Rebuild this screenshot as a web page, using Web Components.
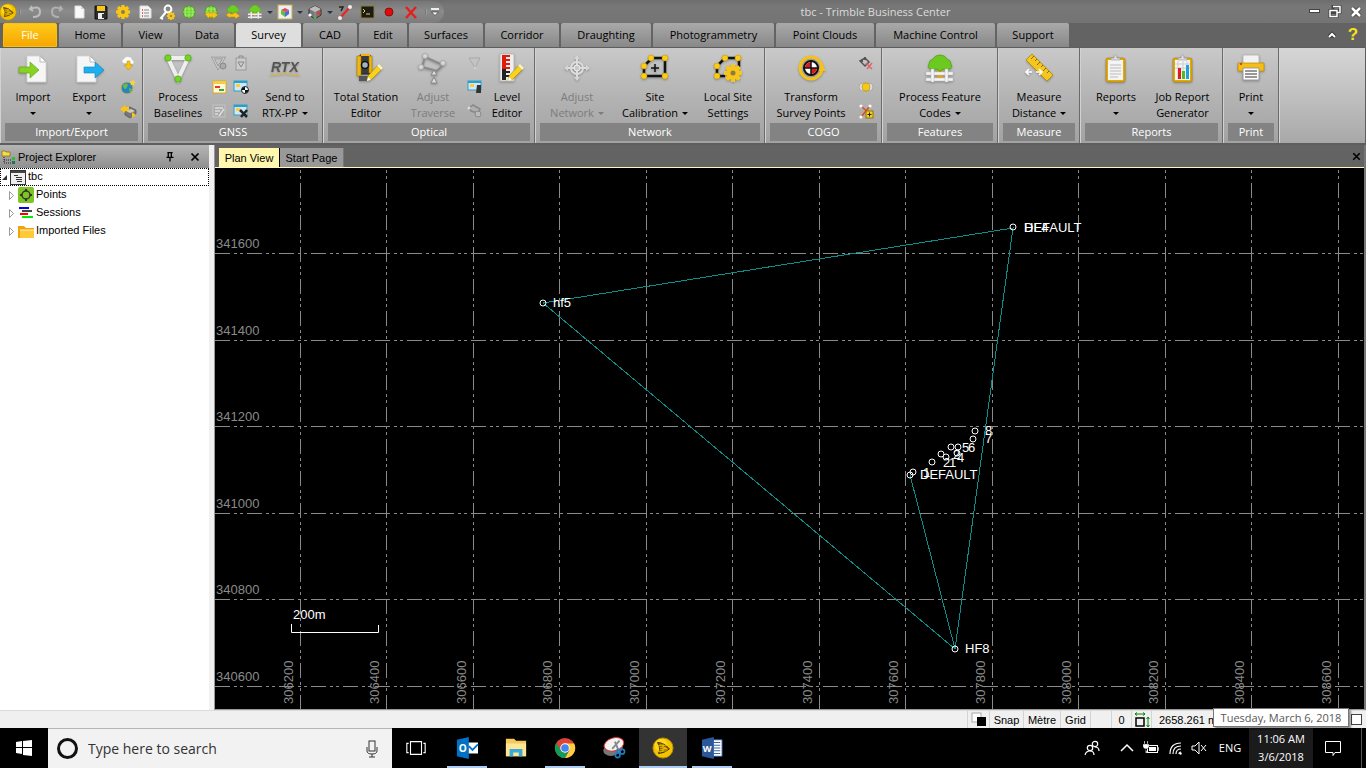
<!DOCTYPE html>
<html lang="en">
<head>
<meta charset="utf-8">
<title>tbc - Trimble Business Center</title>
<style>
html,body{height:100%}
body{margin:0;background:#000;color:#000;font:11px/16px "Open Sans","Noto Sans",sans-serif}
</style>
</head>
<body>
<tbc-app></tbc-app>
<script>
/* ---------- icon library: [view box size, markup] ---------- */
const doc32='<path d="M10 3h13l6 6v20H10z" fill="#f6f6f6" stroke="#d8d8d8"/><path d="M23 3v6h6z" fill="#fff" stroke="#bbb"/>';
const trimble='<circle cx="12" cy="12" r="11" fill="#f5c400" stroke="#b58b00"/><circle cx="10" cy="9" r="7" fill="#ffe028" opacity=".7"/><path d="M6 6q7 0 13 7-6 5-12 5 3-6-1-12z" fill="#8a6a00" stroke="#3f3000" stroke-width="1"/><path d="M9 8l8 6M8 11l9 2M8 14l8-1M9 17l6-6M12 7v9M5 9q6 1 11 0M6 16q4 0 10-1" fill="none" stroke="#f5c400" stroke-width=".8"/>';
const gear=(cx,cy,r)=>{let s='';for(let i=0;i<8;i++)s+=`<rect x="${cx-r*.22}" y="${cy-r}" width="${r*.44}" height="${r*2}" rx="${r*.1}" transform="rotate(${i*45} ${cx} ${cy})"/>`;return `<g fill="#f8c617">${s}<circle cx="${cx}" cy="${cy}" r="${r*.74}"/></g><circle cx="${cx}" cy="${cy}" r="${r*.28}" fill="#8b7b45"/>`};
const pencil='<path d="M17 28l1-5 9-10 4 4-9 9z" fill="#f8d21c" stroke="#a88400" stroke-width=".6"/><path d="M27 13l2-2 4 4-2 2z" fill="#fff2b8"/><path d="M17 28l1-4 3 3z" fill="#fff"/>';
const dots=a=>a.map(p=>`<circle cx="${p[0]}" cy="${p[1]}" r="3" fill="#f9cd15" stroke="#c79500" stroke-width=".5"/>`).join('');
const globe='<circle cx="8" cy="8" r="6" fill="#6ed52e" stroke="#4c9c18"/><path d="M2 8h12M8 2v12M3 5h10M3 11h10M5 3q-2 5 0 10M11 3q2 5 0 10" fill="none" stroke="#b6f58a" stroke-width=".6"/>';
const tree=(g)=>`<path d="M14 14h4l1 11h-6z" fill="#e0a412"/><path d="M6 16q-3-2-1-5 0-4 4-5 2-4 7-4t7 4q4 1 4 5 2 3-1 5-3 1-6 0l-3 1-1 3-1-3-3-1q-3 1-6 0z" fill="${g}" stroke="#4d9f14" stroke-width=".7"/>`;
const fence='<g fill="#f5f5f5" stroke="#b9b9b9" stroke-width=".5"><path d="M2 19h27v3H2zM2 25h27v3H2z"/><path d="M7 16h3v13H7zM21 16h3v13h-3z"/></g>';
const board='<rect x="6" y="5" width="19" height="24" rx="2" fill="#e2aa0c" stroke="#a97e00" stroke-width=".6"/><rect x="8" y="7" width="15" height="20" fill="#f4f4f4"/><path d="M11 7V5h3q0-3 1.500-3T17 5h3v2z" fill="#ddd" stroke="#999" stroke-width=".6"/>';
const ICONS={
trimble:[24,trimble],
undo:[16,'<path d="M5 2l-2 3 3 2M4 5q9-4 9 3 0 5-7 5" fill="none" stroke="#bdbdbd" stroke-width="2"/>'],
redo:[16,'<path d="M11 2l2 3-3 2M12 5Q3 1 3 8q0 5 7 5" fill="none" stroke="#b0b0b0" stroke-width="2"/>'],
newdoc:[16,'<path d="M4 2h6l3 3v9H4z" fill="#fafafa" stroke="#ddd"/><path d="M10 2v3h3" fill="#ccc"/>'],
save:[16,'<path d="M2 2h11l1 1v12H2z" fill="#2c2c2c" stroke="#111"/><rect x="4" y="2" width="8" height="5" fill="#f4c61e"/><rect x="5" y="9" width="6" height="6" fill="#eee"/><rect x="9" y="10" width="2" height="4" fill="#333"/>'],
gear:[16,gear(8,8,7)],
list:[16,'<path d="M3 2h8l3 3v9H3z" fill="#f4f4f4" stroke="#ddd"/><path d="M5 6h1M5 9h1M5 12h1" stroke="#d66" stroke-width="2"/><path d="M7 6h5M7 9h5M7 12h5" stroke="#888"/>'],
key:[16,'<circle cx="9" cy="5" r="3.4" fill="none" stroke="#fff" stroke-width="2"/><path d="M7 8l-5 6 2 1" fill="none" stroke="#fff" stroke-width="2"/>'+gear(12,12,4)],
globe:[16,globe],
globey:[16,globe+'<path d="M2 10l4-3v2h4V7l5 4-5 4v-2H6v2z" fill="#f6c31a" stroke="#a98000" stroke-width=".4"/>'],
treey:[16,'<g transform="scale(.5)">'+tree('#6bd023')+'</g><path d="M1 11l4-3v2h3l2-2 5 4-5 3v-2H5v1z" fill="#f6c31a" stroke="#a98000" stroke-width=".4"/>'],
treef:[16,'<g transform="scale(.5)">'+tree('#6bd023')+fence+'</g>'],
colors:[16,'<rect x="1" y="1" width="14" height="14" fill="#eee" stroke="#c4b05c"/><path d="M8 4l4 2-4 2-4-2z" fill="#e45"/><path d="M4 6l4 2v5l-4-3z" fill="#56c33a"/><path d="M12 6v4l-4 3V8z" fill="#5069d6"/>'],
cube:[16,'<path d="M8 2l6 3v6l-6 4-6-4V5z" fill="#777" stroke="#333"/><path d="M8 2l6 3-6 3-6-3z" fill="#bdbdbd"/><path d="M8 8v7" stroke="#999"/><circle cx="3" cy="11" r="1.6" fill="#fff"/><circle cx="12" cy="9" r="1.8" fill="#e03838"/><circle cx="8" cy="14" r="1.5" fill="#4caf50"/>'],
line:[16,'<path d="M3 14L13 3" stroke="#e22" stroke-width="2"/><path d="M2 3h4l-2 4" fill="none" stroke="#222" stroke-width="1.5"/><circle cx="3" cy="14" r="2" fill="#eee"/><circle cx="13" cy="3" r="2" fill="#eee"/>'],
console:[16,'<rect x="2" y="2" width="13" height="12" fill="#1b1b1b" stroke="#8b7b33"/><path d="M4 5l2 2-2 2M7 10h4" fill="none" stroke="#e9d54b"/>'],
rec:[16,'<circle cx="8" cy="8" r="4" fill="#e10b0b" stroke="#8a1010"/>'],
del:[16,'<path d="M3 3l10 11M13 3L3 14" stroke="#e32020" stroke-width="2.500"/>'],
import:[32,doc32+'<path d="M2 14h11V9l9 8-9 8v-5H2z" fill="#86d321" stroke="#5c9c10" stroke-width=".6"/>'],
export:[32,'<g transform="translate(-6)">'+doc32+'</g><path d="M11 14h11V9l9 8-9 8v-5H11z" fill="#1eaff0" stroke="#1380b8" stroke-width=".6"/>'],
cloud:[16,'<path d="M3 8q-2-3 1-4 1-3 5-2 3 0 3 3 3 1 1 4z" fill="#fff" stroke="#ccc" stroke-width=".5"/><path d="M7 6h3v4h3l-4.500 5L4 10h3z" fill="#fbc510" stroke="#b78800" stroke-width=".5"/>'],
world:[16,'<circle cx="7" cy="9" r="6" fill="#2684c0" stroke="#c9b15a"/><path d="M3 6q4-3 5 0l-2 4q-3 0-3-4M9 9l3 1-2 4z" fill="#69bd45"/><path d="M13 0l1 2.500 2 .5-2 1.500.5 2.500-2-1.500-2 1 .5-2-1.500-2h2.500z" fill="#fbd43a"/>'],
device:[16,'<path d="M4 6l6-2 6 3v4l-6 4-5-3z" fill="#777" stroke="#444" stroke-width=".6"/><path d="M6 8l5-2 4 2-5 2z" fill="#ccc"/><path d="M0 6l5-4v2h4v4H5v2z" fill="#fbc510"/><path d="M16 12l-4-3v6z" fill="#fbc510"/>'],
baselines:[32,'<path d="M6 5h20L16 26z" fill="none" stroke="#eee" stroke-width="4"/><g fill="#72d522" stroke="#4a9c10" stroke-width=".6"><circle cx="6" cy="5" r="3.200"/><circle cx="26" cy="5" r="3.200"/><circle cx="16" cy="26" r="3.200"/></g>'],
gnss1:[16,'<path d="M2 3h11L7 13z" fill="none" stroke="#8f8f8f" stroke-width="2.500"/><path d="M2 3h11L7 13z" fill="none" stroke="#ccc" stroke-width="1.200"/><circle cx="12" cy="11" r="3" fill="#aaa" stroke="#888"/>'],
gnss2:[16,'<rect x="3" y="3" width="10" height="12" fill="#ccc" stroke="#999"/><path d="M6 3V1h4v2M5 7h6l-3 5z" fill="none" stroke="#888"/>'],
gnss3:[16,'<rect x="2" y="2" width="13" height="12" fill="#fff9d8" stroke="#d4ab25"/><rect x="2" y="2" width="13" height="3" fill="#f4cd48"/><path d="M4 8h5" stroke="#e33" stroke-width="2"/><path d="M8 11h5" stroke="#3a3" stroke-width="2"/>'],
gnss4:[16,'<rect x="1" y="2" width="13" height="10" fill="#cfe9f4" stroke="#2a9fc9"/><path d="M1 3h13" stroke="#2a9fc9" stroke-width="2"/><rect x="3" y="5" width="4" height="3" fill="#fc4"/><circle cx="12" cy="11" r="3.500" fill="#fff" stroke="#222"/><path d="M12 8v3H8.500A3.500 3.500 0 0112 8M12 14v-3h3.500A3.500 3.500 0 0112 14" fill="#111"/>'],
gnss5:[16,'<rect x="2" y="2" width="12" height="12" fill="#aaa" stroke="#c4c4c4"/><path d="M4 5h8M4 8h5M4 11h3M13 6l-5 7" stroke="#ddd" stroke-width="1.500"/>'],
gnss6:[16,'<rect x="1" y="2" width="13" height="10" fill="#cfe9f4" stroke="#2a9fc9"/><path d="M1 3h13" stroke="#2a9fc9" stroke-width="2"/><rect x="3" y="5" width="4" height="3" fill="#fc4"/><path d="M7 7l7 7M14 7l-6 7" stroke="#222" stroke-width="2.500"/>'],
rtx:[32,'<text x="2" y="19" font-family="Liberation Sans" font-size="14" font-weight="700" font-style="italic" fill="#555">RTX</text><path d="M1 22q14-3 30 0" fill="none" stroke="#e5b72c"/>'],
station:[32,'<path d="M10 2h10v19H10z" fill="#3b3b3b" stroke="#222"/><path d="M7 3h4v20H7zM19 3h3v17h-3z" fill="#f1b50e" stroke="#9f7600" stroke-width=".6"/><circle cx="15" cy="12" r="3.500" fill="#9db6c2" stroke="#111" stroke-width="1.500"/><path d="M11 2h9" stroke="#f1b50e" stroke-width="2"/><path d="M9 23h11v5H9z" fill="#555"/>'+pencil],
traverse:[32,'<path d="M8 4l18 8-6 6-15-4z" fill="none" stroke="#8a8a8a" stroke-width="2"/><g fill="#d8d8d8" stroke="#aaa"><circle cx="8" cy="3" r="2.500"/><circle cx="26" cy="10" r="2.500"/><circle cx="4" cy="14" r="2.500"/></g><path d="M17 17l3 5h-6zM17 24l3 6h-6z" fill="#ddd" stroke="#888"/>'],
tri:[16,'<path d="M2 3h11L8 13z" fill="none" stroke="#c4c4c4" stroke-width="1.500"/><path d="M2 3h11L8 13z" fill="none" stroke="#999" stroke-width=".6"/><circle cx="8" cy="13" r="1.500" fill="#ccc"/>'],
screen:[16,'<rect x="1" y="2" width="13" height="9" fill="#cfe9f4" stroke="#2a9fc9"/><path d="M1 3h13" stroke="#2a9fc9" stroke-width="2"/><rect x="3" y="5" width="4" height="3" fill="#fc4"/><path d="M10 6h4v8h-5z" fill="#333"/>'],
trav2:[16,'<path d="M2 5l4-3 7 4-2 4-7-2z" fill="none" stroke="#888" stroke-width="1.500"/><circle cx="11" cy="11" r="3" fill="#bbb" stroke="#888"/><circle cx="2" cy="5" r="1.500" fill="#ddd"/>'],
level:[32,'<rect x="9" y="1" width="14" height="27" fill="#eee" stroke="#bbb"/><rect x="11" y="2" width="4" height="14" fill="#e11b0c"/><rect x="11" y="16" width="4" height="11" fill="#222"/><path d="M15 3h4M15 7h4M15 11h4M15 15h4" stroke="#e11b0c" stroke-width="2"/><path d="M15 19h4M15 23h4" stroke="#222" stroke-width="2"/>'+pencil],
adjust:[32,'<g fill="none" stroke="#dcdcdc" stroke-width="2"><circle cx="16" cy="15" r="6"/><path d="M16 5v20M6 15h20"/></g><circle cx="16" cy="15" r="3" fill="#c9c9c9" stroke="#eee"/><path d="M16 2l3 4h-6zM16 28l3-4h-6zM3 15l4-3v6zM29 15l-4-3v6z" fill="#d5d5d5"/>'],
site:[32,'<path d="M13 5h13v18H5V13z" fill="none" stroke="#111" stroke-width="2.500"/><path d="M12 15h8M16 11v8" stroke="#111" stroke-width="1.500"/>'+dots([[12,5],[26,5],[5,13],[5,23],[26,23]])],
local:[32,'<path d="M14 5h13v9M13 23H5V13l8-8" fill="none" stroke="#111" stroke-width="2.500"/>'+dots([[13,5],[26,5],[5,13],[5,23]])+gear(21,20,9)],
transform:[32,'<circle cx="16" cy="15" r="11" fill="none" stroke="#f5c316" stroke-width="3"/><path d="M23 18h8l-4-7z" fill="#f5c316"/><circle cx="16" cy="15" r="7" fill="#fff" stroke="#111" stroke-width="2"/><path d="M16 9v6h-6a6 6 0 016-6M16 21v-6h6a6 6 0 01-6 6" fill="#d61c1c"/><path d="M16 7v16M8 15h16" stroke="#111" stroke-width="1.500"/>'],
cogo1:[16,'<path d="M2 6l5-3 4 4-4 4z" fill="none" stroke="#555" stroke-width="1.500"/><path d="M7 2v3M2 6h3" stroke="#555" stroke-width="2"/><path d="M8 8l6 6M14 8l-5 6" stroke="#d66" stroke-width="1.500"/>'],
cogo2:[16,'<rect x="1" y="4" width="14" height="8" rx="4" fill="#ddd" stroke="#aaa"/><circle cx="8" cy="8" r="4" fill="#f7c916" stroke="#a88400" stroke-width=".5"/>'],
cogo3:[16,'<path d="M3 3l10 9M12 3L3 14" stroke="#e24a1c" stroke-width="1.500"/><g fill="#fff"><circle cx="3" cy="3" r="1.600"/><circle cx="12" cy="3" r="1.600"/><circle cx="3" cy="14" r="1.600"/></g><rect x="8" y="8" width="7" height="7" fill="#f6cf1a" stroke="#8f7500"/><path d="M11.500 9.500v4M9.500 11.500h4" stroke="#222"/>'],
feature:[32,tree('#6cc91f')+fence],
measure:[32,'<path d="M9 1L30 22l-6 6L3 7z" fill="#f5c61b" stroke="#ad8200" stroke-width=".7"/><path d="M11 3l-3 3M14 6l-2 2M17 9l-3 3M20 12l-2 2M23 15l-3 3M26 18l-2 2" stroke="#8a6800"/><path d="M3 19h6M13 19h6M6 16l-3 3 3 3M16 16l3 3-3 3" fill="none" stroke="#fff" stroke-width="1.600"/>'],
report:[32,board+'<path d="M10 12h11M10 15h11M10 18h11M10 21h11M10 24h8" stroke="#bbb"/>'],
job:[32,board+'<path d="M11 8v18M16 8v18M20 8v18M8 11h15M8 15h15" stroke="#ccc"/><path d="M11 15h3v11h-3z" fill="#d81f1f"/><path d="M15 18h3v8h-3z" fill="#53b91e"/><path d="M19 12h3v14h-3z" fill="#1ea1dd"/>'],
print:[32,'<path d="M8 2h16v10H8z" fill="#f2f2f2" stroke="#bbb"/><path d="M3 10h26v8H3z" fill="#f6bd13" stroke="#b98a00" stroke-width=".7"/><circle cx="6" cy="11" r="1" fill="#c22"/><path d="M8 15h16v12H8z" fill="#fff" stroke="#999"/><path d="M10 18h12M10 21h12M10 24h12" stroke="#777" stroke-width="1.500"/>'],
explorer:[16,'<path d="M1 2h3l1 1h4v4H1z" fill="#f7dc4a" stroke="#7c6a00" stroke-width=".7"/><path d="M3 8v6h7M3 11h7" fill="none" stroke="#222" stroke-dasharray="1 1"/><rect x="11" y="8" width="3" height="3" fill="#3b3"/><rect x="11" y="12" width="3" height="3" fill="#175"/>'],
pin:[16,'<path d="M5 3h6M6 3v5M9.500 3v5M4 8.500h8M8 9v4" fill="none" stroke="#000" stroke-width="1.500"/>'],
close:[16,'<path d="M4 4l8 8M12 4l-8 8" stroke="#000" stroke-width="2"/>'],
project:[16,'<rect x=".5" y="1.500" width="15" height="14" fill="#eee" stroke="#333"/><path d="M1 3h14" stroke="#444" stroke-width="2"/><path d="M4 6.500h4M6 8.500h6M6 10.500h6M7 12.500h5" stroke="#333"/>'],
points:[16,'<rect width="16" height="16" rx="2" fill="#7ec423"/><path d="M8 2v12M2 8h12" stroke="#333" stroke-width="2"/><circle cx="8" cy="8" r="4" fill="#7ec423" stroke="#333" stroke-width="1.500"/>'],
sessions:[16,'<path d="M1 3h10" stroke="#0000f0" stroke-width="2"/><path d="M4 6h10" stroke="#444" stroke-width="2"/><path d="M2 9h8" stroke="#f00" stroke-width="2"/><path d="M4 12h11" stroke="#0e0" stroke-width="2"/>'],
folder:[16,'<path d="M0 3h6l2 2h8v10H0z" fill="#f0a30a"/><path d="M2 15V7h14v8z" fill="#ffc93a"/><path d="M2 7h14" stroke="#fff3b8"/>'],
windows:[16,'<path d="M0 2l6-1v6H0zM7 1l9-1v7H7zM0 8h6v6l-6-1zM7 8h9v8l-9-1z" fill="#fff"/>'],
mic:[24,'<rect x="9" y="4" width="6" height="10" fill="none" stroke="#333"/><path d="M7 10v4q0 3 5 3t5-3v-4M12 17v3M9 20h6" fill="none" stroke="#333"/>'],
taskview:[24,'<path d="M6 5h12v14H6zM4 7H2v10h2M20 7h2v10h-2" fill="none" stroke="#fff" stroke-width="1.200"/>'],
outlook:[24,'<path d="M12 6h12v12H12z" fill="#fff"/><path d="M14 10l4 4 6-6" fill="none" stroke="#0072c6" stroke-width="2"/><path d="M1 3l13-3v24L1 21z" fill="#0072c6"/><text x="3" y="16" font-family="Open Sans" font-size="11" font-weight="700" fill="#fff">O</text>'],
word:[24,'<path d="M13 3h10v18H13z" fill="#fff" stroke="#2b579a"/><path d="M14 6h7M14 9h7M14 12h7M14 15h7M14 18h7" stroke="#2b579a"/><path d="M1 3l13-3v24L1 21z" fill="#2b579a"/><text x="2" y="16" font-family="Open Sans" font-size="10" font-weight="700" fill="#fff">W</text>'],
files:[24,'<path d="M1 2h9l2 2h11v17H1z" fill="#f4c95d"/><path d="M1 7h22v14H1z" fill="#ffe695"/><path d="M5 21v-8h14v8h-4v-4h-6v4z" fill="#39a9dc"/>'],
chrome:[24,'<circle cx="12" cy="12" r="11" fill="#db4437"/><path d="M12 7h10a11 11 0 01-10 16l5-9z" fill="#ffcd40"/><path d="M2.500 6.500l5 8.500L12 23q-2 0-4-.7A11 11 0 012.500 6.500" fill="#0f9d58"/><path d="M7 14l5 4 5-4-5 9q-2 0-4-.7z" fill="#0f9d58"/><circle cx="12" cy="12" r="5.200" fill="#fff"/><circle cx="12" cy="12" r="4.200" fill="#4285f4"/>'],
snip:[24,'<ellipse cx="11" cy="13" rx="11" ry="7" fill="#777" transform="rotate(-20 11 13)"/><ellipse cx="12" cy="8" rx="11" ry="7" fill="#f3f3f3" stroke="#d33" transform="rotate(-16 12 8)"/><path d="M10 13l8-9M13 5l5 12" stroke="#888" stroke-width="2"/><g fill="none" stroke="#1d7fc4" stroke-width="1.800"><circle cx="16" cy="20" r="2.500"/><circle cx="21" cy="16" r="2.500"/><path d="M15 17l1-4M19 15l-4-1"/></g>'],
people:[16,'<g fill="none" stroke="#fff" stroke-width="1.200"><circle cx="6" cy="8" r="2.700"/><path d="M1 15q1-4 5-4t4 4"/><circle cx="11" cy="4" r="2.700"/><path d="M11 7q4 0 4 4"/></g>'],
chev:[16,'<path d="M2 11l6-6 6 6" fill="none" stroke="#fff" stroke-width="1.500"/>'],
battery:[16,'<rect x="4.500" y="5.500" width="10" height="7" fill="none" stroke="#fff"/><path d="M6 7h7v4H6z" fill="#fff"/><path d="M15 7h1v4h-1zM0 4h6v3q-1 2-3 2T0 7zM1 1h1v3H1zM4 1h1v3H4zM2.500 9v4h2" fill="#fff" stroke="#000" stroke-width=".3"/>'],
wifi:[16,'<g fill="none" stroke="#fff" stroke-width="1.200"><path d="M12 14q0-2 2-2M9 14q0-5 5-5M6 14q0-8 8-8M3 14Q3 3 14 3" /></g><circle cx="13.500" cy="13.500" r="1.200" fill="#fff"/>'],
sound:[16,'<path d="M1 6h3l4-4v12l-4-4H1z" fill="none" stroke="#fff"/><path d="M10 5l5 6M15 5l-5 6" stroke="#fff"/>'],
notif:[16,'<path d="M.5 1.500h15v11H10l-2 3v-3H.5z" fill="none" stroke="#fff"/>'],
swatch:[16,'<rect x="1" y="1" width="9" height="9" fill="#fff" stroke="#aaa"/><rect x="6" y="5" width="9" height="9" fill="#000"/>'],
extent:[16,'<path d="M2 6h8v8H2z" fill="none" stroke="#000" stroke-width="1.500"/><path d="M1 2h10M1 2l2-1.500M1 2l2 1.500M11 2L9 .5M11 2L9 3.500M14 5v10M12.500 7L14 5l1.500 2M12.500 13l1.500 2 1.500-2" fill="none" stroke="#080"/>'],
min:[16,'<rect x="3.500" y="5.500" width="10" height="3" fill="#fff" stroke="#444"/>'],
restore:[16,'<path d="M6 2.500h7v6H6zM3 6.500h7v6H3z" fill="none" stroke="#444" stroke-width="3"/><path d="M6 2.500h7v6h-3M3 6.500h7v6H3z" fill="none" stroke="#fff" stroke-width="1.500"/>'],
winx:[16,'<path d="M4 4l8 8M12 4l-8 8" stroke="#444" stroke-width="4.500"/><path d="M4 4l8 8M12 4l-8 8" stroke="#fff" stroke-width="2.500"/>'],
up:[16,'<path d="M5 10l3-3 3 3" fill="none" stroke="#333" stroke-width="4"/><path d="M5 10l3-3 3 3" fill="none" stroke="#fff" stroke-width="2"/>'],
qmore:[16,'<path d="M4 5h8" stroke="#eee" stroke-width="2"/><path d="M4.500 8h7L8 11.500z" fill="#fff" stroke="#333" stroke-width=".7"/>'],
sep:[16,'<path d="M7 2v12" stroke="#555"/><path d="M8.500 2v12" stroke="#bbb"/>'],
down:[16,'<path d="M5 7h6l-3 3z" fill="#27344a"/>']
};
const make=(name,css,html)=>customElements.define(name,class extends HTMLElement{
  connectedCallback(){
    if(this.shadowRoot)return;
    const r=this.attachShadow({mode:'open'});
    r.innerHTML=`<style>*{box-sizing:border-box}button,input{font:inherit;color:inherit;margin:0;padding:0;border:0;background:none}${css}</style>`+(typeof html==='function'?html(this):html);
  }
});
const A=(e,n,d='')=>e.getAttribute(n)??d;

make('ui-icon',':host{display:block;width:var(--s,16px);height:var(--s,16px);flex:none}svg{display:block;width:100%;height:100%;overflow:visible}',
 e=>{const [s,m]=ICONS[A(e,'name')];return `<svg viewBox="0 0 ${s} ${s}" aria-hidden="true">${m}</svg>`});

make('icon-button',':host{display:block;flex:none}button{display:flex;align-items:center;justify-content:center;width:100%;height:100%}',
 e=>`<button aria-label="${A(e,'label')}"><ui-icon name="${A(e,'icon')}"></ui-icon></button>`);

/* ---------- title bar: [icon, label, width, icon size] ---------- */
const QAT=[['trimble','Application menu',16,18],['sep','',8],['undo','Undo',22],['redo','Redo'],['newdoc','New'],['save','Save'],['gear','Settings'],['list','Properties'],['key','Licence'],['globe','Globe'],['globey','Coordinates'],['treey','Features'],['treef','Feature codes'],['down','More',8],['colors','Colours'],['down','More',8],['cube','3D view'],['down','More',8],['line','Line'],['console','Commands'],['rec','Record'],['del','Delete'],['sep','',8],['qmore','Customise',10]];
make('title-bar',`:host{display:flex;height:23px;background:linear-gradient(#6d6d6d,#777 6px,#747474);align-items:center;color:#dcdcdc;font-size:11px}
.q{display:flex;align-items:center;height:22px;background:linear-gradient(#767676,#8b8b8b 10px,#7c7c7c);border-radius:0 12px 12px 0;padding-right:4px}
.q icon-button{width:22px;height:22px}.q ui-icon{width:8px;height:16px}
h1{flex:1;font:inherit;margin:0;text-align:center;white-space:nowrap;padding-left:4px}
.w{display:flex}.w icon-button{width:21px;height:20px}`,
()=>`<div class="q" role="toolbar">${QAT.map(q=>q[0]=='sep'?`<ui-icon name="sep"></ui-icon>`:`<icon-button icon="${q[0]}" label="${q[1]}"${q[2]?` style="width:${q[2]}px${q[3]?`;--s:${q[3]}px`:''}"`:''}></icon-button>`).join('')}</div>
<h1>tbc - Trimble Business Center</h1>
<div class="w"><icon-button icon="min" label="Minimise"></icon-button><icon-button icon="restore" label="Restore"></icon-button><icon-button icon="winx" label="Close"></icon-button></div>`);

/* ---------- ribbon tabs ---------- */
const TABS=[['File',54],['Home',62],['View',55],['Data',54],['Survey',65],['CAD',54],['Edit',48],['Surfaces',74],['Corridor',74],['Draughting',90],['Photogrammetry',121],['Point Clouds',98],['Machine Control',119],['Support',72]];
make('ribbon-tabs',`:host{display:flex;gap:2px;height:24px;background:#636363;padding-left:3px;align-items:stretch;box-sizing:border-box}
button{background:linear-gradient(#a9a9a9,#888);border-radius:2px 2px 0 0;line-height:24px;white-space:nowrap}
button.file{background:linear-gradient(#ffc91c,#f5a700);border:1px solid #ffc000;color:#fff;line-height:22px}
button.on{background:#dedede}
.e{margin-left:auto;display:flex;align-items:center}.e icon-button{width:20px}
button.h{width:22px;margin-right:2px;text-align:center;color:#f7e11b;font:bold 17px/22px "Liberation Sans",sans-serif;background:none}`,
()=>TABS.map((t,i)=>`<button role="tab" style="width:${t[1]}px" class="${i==0?'file':i==4?'on':''}">${t[0]}</button>`).join('')+`<div class="e"><icon-button icon="up" label="Collapse ribbon"></icon-button><button class="h" aria-label="Help">?</button></div>`);

make('ribbon-button',`:host{display:block;flex:none;height:100%}
button{display:flex;flex-direction:column;align-items:center;width:100%;height:100%;padding-top:4px;white-space:nowrap}
button:disabled{color:#7c7c7c}
ui-icon{--s:32px;margin-bottom:4px;filter:drop-shadow(0 1px 1px #0004)}
span{display:flex;align-items:center;justify-content:center;height:16px;gap:4px}
i{border:3px solid transparent;border-top-color:currentColor;border-bottom:0}`,
e=>{const [a,b='']=A(e,'label').split('|');return `<button${e.hasAttribute('off')?' disabled':''}><ui-icon name="${A(e,'icon')}"></ui-icon><span>${a}</span><span>${b}${e.hasAttribute('menu')?'<i></i>':''}</span></button>`});

make('tool-column',':host{display:flex;flex-direction:column;width:22px;flex:none;padding-top:2px;box-sizing:border-box}icon-button{height:24px}',
e=>A(e,'icons').split(' ').map(n=>`<icon-button icon="${n}" label="${n}"></icon-button>`).join(''));

make('ribbon-group',`:host{display:flex;flex-direction:column;flex:none;padding:1px 4px 2px;border-left:1px solid #d2d2d2;border-right:1px solid #6b6b6b;box-sizing:border-box;background:linear-gradient(#c9c9c9,#b4b4b4 50%,#a2a2a2)}
.c{display:flex;flex:1;min-height:0}
.t{height:18px;line-height:18px;background:#838383;color:#fff;text-align:center;font-size:11px}`,
e=>`<div class="c"><slot></slot></div><div class="t">${A(e,'label')}</div>`);

const B=(w,icon,label,x='')=>`<ribbon-button style="width:${w}px" icon="${icon}" label="${label}" ${x}></ribbon-button>`;
const C=(icons,m=0)=>`<tool-column icons="${icons}"${m?` style="margin-left:${m}px"`:''}></tool-column>`;
const G=(w,l,c)=>`<ribbon-group style="width:${w}px" label="${l}">${c}</ribbon-group>`;
make('survey-ribbon',`:host{display:flex;height:98px;padding:1px 1px 2px 0;box-sizing:border-box;background:#5e5e5e}
.f{flex:1;background:linear-gradient(#d6d6d6,#c0c0c0 50%,#a8a8a8);border-left:1px solid #d6d6d6}`,
()=>G(143,'Import/Export',B(56,'import','Import','menu')+B(56,'export','Export','menu')+C('cloud world device'))
+G(180,'GNSS',B(60,'baselines','Process|Baselines')+C('gnss1 gnss3 gnss5')+C('gnss2 gnss4 gnss6')+B(66,'rtx','Send to|RTX-PP','menu'))
+G(212,'Optical',B(76,'station','Total Station|Editor')+B(58,'traverse','Adjust|Traverse','off')+C('tri screen trav2',2)+B(42,'level','Level|Editor'))
+G(230,'Network',B(74,'adjust','Adjust|Network','off menu')+B(82,'site','Site|Calibration','menu')+B(64,'local','Local Site|Settings'))
+G(117,'COGO',B(82,'transform','Transform|Survey Points')+C('cogo1 cogo2 cogo3',3))
+G(116,'Features',B(106,'feature','Process Feature|Codes','menu'))
+G(82,'Measure',B(72,'measure','Measure|Distance','menu'))
+G(143,'Reports',B(62,'report','Reports','menu')+B(71,'job','Job Report|Generator'))
+G(56,'Print',B(46,'print','Print','menu'))+'<div class="f"></div>');

/* ---------- project explorer ---------- */
make('tree-item',`:host{display:flex;align-items:center;height:18px;gap:2px;padding-left:8px;white-space:nowrap}
:host([root]){border:1px dotted #000;padding-left:0;box-sizing:border-box}
svg{width:8px;height:9px;flex:none}:host([root]) svg{width:7px}span{line-height:16px;padding-bottom:2px}`,
e=>`${e.hasAttribute('root')?'<svg viewBox="0 0 7 9"><path d="M6 2v5H1z" fill="#333"/></svg>':'<svg viewBox="0 0 8 9"><path d="M1.500 .5l4 4-4 4z" fill="#fff" stroke="#999"/></svg>'}<ui-icon name="${A(e,'icon')}"></ui-icon><span><slot></slot></span>`);
make('project-explorer',`:host{display:block;width:209px;flex:none;background:#fff;font:11px/16px "Liberation Sans",sans-serif}
header{display:flex;align-items:center;height:23px;background:linear-gradient(#b5b5b5,#8f8f8f);padding:0 2px 0 1px;gap:1px}
h2{font:inherit;margin:0;flex:1}icon-button{width:24px;height:22px;--s:14px}`,
`<header><ui-icon name="explorer"></ui-icon><h2>Project Explorer</h2><icon-button icon="pin" label="Pin"></icon-button><icon-button icon="close" label="Close panel"></icon-button></header>
<tree-item root icon="project">tbc</tree-item><tree-item icon="points">Points</tree-item><tree-item icon="sessions">Sessions</tree-item><tree-item icon="folder">Imported Files</tree-item>`);

/* ---------- plan view ---------- */
make('plan-view',`:host{display:block;flex:1;min-height:0;overflow:hidden;background:#000}
svg{display:block;width:100%;height:100%;font:13px "Liberation Sans",sans-serif}
.g{stroke:#8a8a8a;stroke-dasharray:15 4 3 3 3 4}.l{fill:#8a8a8a}.w{fill:#fff}.n{stroke:#0a8f8c;fill:none;shape-rendering:crispEdges}.p{fill:none;stroke:#fff}`,
()=>{
 let s='';
 const xs=[300,386,473,559,646,732,819,905,992,1078,1165,1251,1338],ys=[253,340,426,513,599,686];
 xs.forEach((x,i)=>{s+=`<path class="g" stroke-dashoffset="17" d="M${x+.5} 168V2000"/><text class="l" transform="translate(${x-7} 704) rotate(-90)">${306200+i*200}</text>`});
 ys.forEach((y,i)=>{s+=`<path class="g" d="M215 ${y+.5}H4000"/><text class="l" x="216" y="${y-5}">${341600-i*200}</text>`});
 s+='<path class="n" d="M955 649L543 303L1013 228L955 649L910 475"/><path class="p" d="M291.500 624v8.500h87V625"/>';
 [[1013,227],[543,303],[955,649],[910,475],[913,472],[932,462],[941,454],[946,457],[951,447],[958,447],[957,453],[973,439],[975,431]].forEach(p=>{s+=`<circle class="p" cx="${p[0]}" cy="${p[1]}" r="3"/>`});
 [[1024,232,'DEFAULT'],[1024,232,'HF4'],[553,307,'hf5'],[965,653,'HF8'],[920,479,'DEFAULT'],[923,477,'1'],[943,467,'2'],[949,467,'1'],[953,459,'2'],[957,462,'4'],[962,452,'5'],[968,452,'6'],[985,435,'8'],[985,443,'7'],[293,619,'200m']].forEach(t=>{s+=`<text class="w" x="${t[0]}" y="${t[1]}">${t[2]}</text>`});
 return `<svg role="img" aria-label="Plan view"><g transform="translate(-215 -168)">${s}</g></svg>`});
make('document-area',`:host{display:flex;flex-direction:column;flex:1;min-width:0;background:#636363;border-left:1px solid #999;border-right:2px solid #777;border-bottom:1px solid #999;box-sizing:border-box;font:11px/16px "Liberation Sans",sans-serif}
nav{display:flex;height:23px;align-items:stretch;padding:3px 0 0 4px;border-bottom:1px solid #fff8c4}
button{background:#999;width:64px;line-height:18px;border-right:1px solid #777}
button.on{background:#fff7ae;width:61px;border-right:1px solid #000}
icon-button{margin-left:auto;width:16px;--s:13px;margin-top:-3px}`,
`<nav role="tablist"><button role="tab" class="on">Plan View</button><button role="tab">Start Page</button><icon-button icon="close" label="Close view"></icon-button></nav><plan-view></plan-view>`);

/* ---------- status bar ---------- */
make('status-bar',`:host{display:flex;justify-content:flex-end;height:18px;background:#f0f0f0;border-top:1px solid #dcdcdc;box-sizing:content-box;font:11px/18px "Liberation Sans",sans-serif}
span{border-left:1px solid #d4d4d4;display:flex;align-items:center;justify-content:center;white-space:nowrap}
.c{width:215px;justify-content:flex-start;padding:0 4px 0 7px}
input{appearance:none;margin-left:auto;width:11px;height:11px;border:1px solid #444;background:#fff}`,
`<span style="width:22px"><ui-icon name="swatch"></ui-icon></span><span style="width:34px">Snap</span><span style="width:37px">Mètre</span><span style="width:30px">Grid</span><span style="width:21px"></span><span style="width:20px">0</span><span style="width:20px"><ui-icon name="extent"></ui-icon></span><span class="c">2658.261 m<input type="checkbox" aria-label="Lock scale"></span>`);

/* ---------- taskbar ---------- */
make('task-button',`:host{display:block;flex:none;width:48px;--s:22px}
:host([run]) button{background:linear-gradient(#a9cdf5,#a9cdf5) 50% 100%/40px 2px no-repeat}
:host([on]){background:#333}:host([on]) button{background-size:48px 2px}
button{display:flex;align-items:center;justify-content:center;width:100%;height:100%}`,
e=>`<button aria-label="${A(e,'label')}"><ui-icon name="${A(e,'icon')}"></ui-icon></button>`);
make('task-bar',`:host{display:flex;position:relative;height:40px;background:#000;color:#fff}
form{display:flex;align-items:center;margin:0;width:344px;background:#f2f2f2;border-top:1px solid #b5b5b5;color:#333;padding:0 8px 0 9px;gap:10px}
form i{width:21px;height:21px;border:3px solid #111;border-radius:50%}
input{flex:1;min-width:0;font-size:14px;line-height:20px;outline:0}input::placeholder{color:#333;opacity:1}
form icon-button{--s:24px;width:24px}
.a{display:flex;gap:1px}.a :first-child{margin-right:2px}
.t{display:flex;margin-left:auto;align-items:stretch}
.t>icon-button{width:24px}
.lang{width:38px;text-align:center;font-size:11px}
.clock{width:64px;background:#1b1b1b;line-height:18px;text-align:center}
.d{width:5px;border-left:1px solid #555;margin-left:8px}
.tip{position:absolute;right:17px;bottom:41px;height:19px;width:136px;background:#fff;border:1px solid #767676;box-shadow:2px 2px 2px #0006;color:#575757;line-height:17px;text-align:center;white-space:nowrap}`,
`<task-button icon="windows" label="Start" style="--s:16px"></task-button>
<form role="search"><i></i><input type="text" placeholder="Type here to search" aria-label="Search"><icon-button icon="mic" label="Voice"></icon-button></form>
<div class="a"><task-button icon="taskview" label="Task view"></task-button><task-button run icon="outlook" label="Outlook"></task-button><task-button icon="files" label="File Explorer"></task-button><task-button run icon="chrome" label="Chrome"></task-button><task-button icon="snip" label="Snipping Tool"></task-button><task-button run on icon="trimble" label="Trimble Business Center"></task-button><task-button run icon="word" label="Word"></task-button></div>
<div class="t"><icon-button icon="people" label="People" style="width:46px"></icon-button><icon-button icon="chev" label="Hidden icons"></icon-button><icon-button icon="battery" label="Battery"></icon-button><icon-button icon="wifi" label="Network"></icon-button><icon-button icon="sound" label="Volume"></icon-button><button class="lang">ENG</button><button class="clock">11:06 AM<br>3/6/2018</button><icon-button icon="notif" label="Notifications" style="width:40px"></icon-button><div class="d"></div></div>
<div class="tip" role="tooltip">Tuesday, March 6, 2018</div>`);

make('tbc-app',`:host{display:flex;flex-direction:column;height:100vh;overflow:hidden}
main{display:flex;flex:1;min-height:0;gap:5px;background:#f0f0f0}`,
`<title-bar></title-bar><ribbon-tabs role="tablist"></ribbon-tabs><survey-ribbon></survey-ribbon><main><project-explorer></project-explorer><document-area></document-area></main><status-bar></status-bar><task-bar></task-bar>`);
</script>
</body>
</html>
